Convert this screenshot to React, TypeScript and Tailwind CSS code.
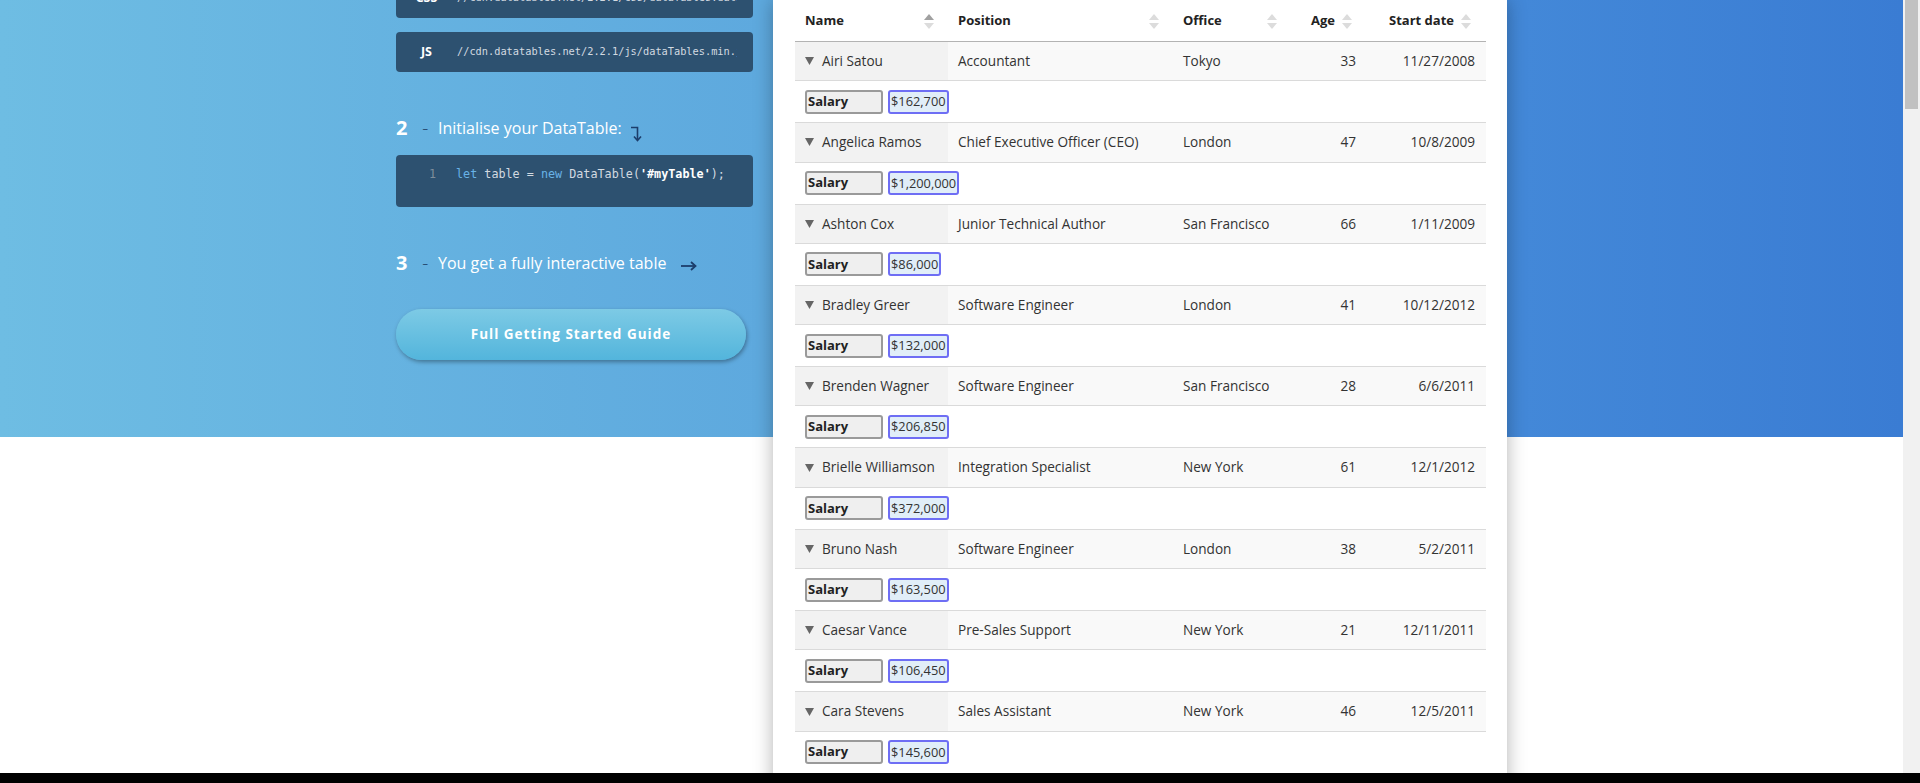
import React from "react";

type Person = {
  name: string;
  position: string;
  office: string;
  age: number;
  start: string;
  salary: string;
};

const people: Person[] = [
  { name: "Airi Satou", position: "Accountant", office: "Tokyo", age: 33, start: "11/27/2008", salary: "$162,700" },
  { name: "Angelica Ramos", position: "Chief Executive Officer (CEO)", office: "London", age: 47, start: "10/8/2009", salary: "$1,200,000" },
  { name: "Ashton Cox", position: "Junior Technical Author", office: "San Francisco", age: 66, start: "1/11/2009", salary: "$86,000" },
  { name: "Bradley Greer", position: "Software Engineer", office: "London", age: 41, start: "10/12/2012", salary: "$132,000" },
  { name: "Brenden Wagner", position: "Software Engineer", office: "San Francisco", age: 28, start: "6/6/2011", salary: "$206,850" },
  { name: "Brielle Williamson", position: "Integration Specialist", office: "New York", age: 61, start: "12/1/2012", salary: "$372,000" },
  { name: "Bruno Nash", position: "Software Engineer", office: "London", age: 38, start: "5/2/2011", salary: "$163,500" },
  { name: "Caesar Vance", position: "Pre-Sales Support", office: "New York", age: 21, start: "12/11/2011", salary: "$106,450" },
  { name: "Cara Stevens", position: "Sales Assistant", office: "New York", age: 46, start: "12/5/2011", salary: "$145,600" },
  { name: "Cedric Kelly", position: "Senior Javascript Developer", office: "Edinburgh", age: 22, start: "3/29/2012", salary: "$433,060" },
];

const cols = "grid grid-cols-[153px_225px_118px_75px_120px]";

function SortIcon({ active = false }: { active?: boolean }) {
  return (
    <svg width="10" height="15" viewBox="0 0 10 15" className="shrink-0">
      <polygon points="0,6 5,0 10,6" fill={active ? "#a0a0a0" : "#dcdcdc"} />
      <polygon points="0,9 10,9 5,15" fill="#dcdcdc" />
    </svg>
  );
}

function Header() {
  return (
    <div className={`${cols} h-[42px] border-b border-[#b3b3b3] pt-[1px] text-[13px] font-bold text-[#222]`}>
      <div className="flex items-center pl-[10px] pr-[14px]">
        <span>Name</span>
        <span className="ml-auto">
          <SortIcon active />
        </span>
      </div>
      <div className="flex items-center pl-[10px] pr-[14px]">
        <span>Position</span>
        <span className="ml-auto">
          <SortIcon />
        </span>
      </div>
      <div className="flex items-center pl-[10px] pr-[14px]">
        <span>Office</span>
        <span className="ml-auto">
          <SortIcon />
        </span>
      </div>
      <div className="flex items-center justify-end gap-[7px] pr-[14px]">
        <span>Age</span>
        <SortIcon />
      </div>
      <div className="flex items-center justify-end gap-[7px] pr-[15px]">
        <span>Start date</span>
        <SortIcon />
      </div>
    </div>
  );
}

function Row({ p }: { p: Person }) {
  return (
    <>
      <div className={`${cols} h-[39.3px] border-b border-[#dadada] bg-[#f9f9f9] text-[13.6px] text-[#333]`}>
        <div className="flex items-center bg-[#f2f2f2] pl-[10px]">
          <svg width="9" height="8" viewBox="0 0 9 8" className="shrink-0">
            <polygon points="0,0 9,0 4.5,8" fill="#666" />
          </svg>
          <span className="ml-[8px] whitespace-nowrap">{p.name}</span>
        </div>
        <div className="flex items-center pl-[10px] whitespace-nowrap">{p.position}</div>
        <div className="flex items-center pl-[10px] whitespace-nowrap">{p.office}</div>
        <div className="flex items-center justify-end pr-[10px]">{p.age}</div>
        <div className="flex items-center justify-end pr-[11px]">{p.start}</div>
      </div>
      <div className="flex h-[42px] items-center gap-[5px] border-b border-[#dadada] bg-white pl-[10px]">
        <div className="flex h-[24px] w-[78px] items-center rounded-[3px] border-2 border-[#9a9a9a] bg-[#efefef] pl-[1px] text-[13px] font-bold text-[#222]">
          Salary
        </div>
        <div className="flex h-[24px] items-center rounded-[3px] border-2 border-[#6e6ef4] bg-[#e1eef8] px-[1px] text-[12.8px] text-[#333]">
          {p.salary}
        </div>
      </div>
    </>
  );
}

function CodeLabelBox({ label, url }: { label: string; url: string }) {
  return (
    <div className="flex h-[40px] items-center rounded-[4px] bg-[#2d5170]">
      <div className="w-[61px] shrink-0 text-center text-[12.5px] font-bold text-white">{label}</div>
      <div className="w-[280px] overflow-hidden whitespace-nowrap font-['DejaVu_Sans_Mono',monospace] text-[10.3px] text-[#d3dae1]">
        {url}
      </div>
    </div>
  );
}

function StepHeading({ num, text, icon }: { num: string; text: string; icon: React.ReactNode }) {
  return (
    <div className="flex h-[30px] items-center text-white">
      <span className="text-[20px] font-bold leading-none">{num}</span>
      <span className="ml-[15px] text-[11px] text-[#1d3d66]">–</span>
      <span className="ml-[10px] text-[16px]">{text}</span>
      {icon}
    </div>
  );
}

export default function App() {
  return (
    <div className="flex h-[783px] w-[1920px] flex-col overflow-hidden bg-black font-['Open_Sans','Noto_Sans',sans-serif]">
      <div className="flex h-[773px]">
        <div className="flex-1 overflow-hidden bg-white">
          <section className="h-[437px] bg-[linear-gradient(to_right,#6ebde3_0%,#5ea9de_40%,#4388d8_80%,#3a7cd3_100%)]">
            <div className="mx-auto flex w-[1111px] items-start gap-[20px]">
              {/* Getting started steps */}
              <div className="-mt-[22px] w-[357px] shrink-0">
                <CodeLabelBox label="CSS" url="//cdn.datatables.net/2.2.1/css/dataTables.dataTables.min.css" />
                <div className="mt-[14px]">
                  <CodeLabelBox label="JS" url="//cdn.datatables.net/2.2.1/js/dataTables.min.js" />
                </div>

                <div className="mt-[41px]">
                  <StepHeading
                    num="2"
                    text="Initialise your DataTable:"
                    icon={
                      <svg width="13" height="16" viewBox="0 0 13 16" className="ml-[8px] mt-[12px]">
                        <path d="M1 1.5 H7.5 V13.5" fill="none" stroke="#1c3d6b" strokeWidth="1.6" />
                        <path d="M4 10.5 L7.5 14.5 L11 10.5" fill="none" stroke="#1c3d6b" strokeWidth="1.6" />
                      </svg>
                    }
                  />
                </div>

                <div className="mt-[12px] h-[52px] rounded-[4px] bg-[#2d5170] pt-[11px]">
                  <div className="flex h-[18px] items-center font-['DejaVu_Sans_Mono',monospace] text-[11.75px]">
                    <span className="w-[40px] shrink-0 text-right text-[#7d8d9b]">1</span>
                    <span className="ml-[20px] whitespace-nowrap text-[#d3dae1]">
                      <span className="text-[#69b3e7]">let</span> table = <span className="text-[#69b3e7]">new</span> DataTable(
                      <span className="font-bold text-white">'#myTable'</span>);
                    </span>
                  </div>
                </div>

                <div className="mt-[41px]">
                  <StepHeading
                    num="3"
                    text="You get a fully interactive table"
                    icon={
                      <svg width="17" height="10" viewBox="0 0 17 10" className="ml-[14px] mt-[5px]">
                        <path d="M1 5 H15" fill="none" stroke="#1c3d6b" strokeWidth="1.8" />
                        <path d="M11 1 L15.5 5 L11 9" fill="none" stroke="#1c3d6b" strokeWidth="1.8" />
                      </svg>
                    }
                  />
                </div>

                <div className="mt-[31px] flex h-[51px] w-[350px] items-center justify-center rounded-full bg-[linear-gradient(to_bottom,#7dcae5,#53b5dc)] text-[13.5px] font-bold tracking-[1px] text-white shadow-[1px_2px_4px_rgba(0,0,0,0.35)]">
                  Full Getting Started Guide
                </div>
              </div>

              {/* Demo table panel */}
              <div className="w-[734px] shrink-0 bg-white pl-[22px] pr-[21px] shadow-[0_0_18px_rgba(0,0,0,0.3)]">
                <div className="h-[800px]">
                  <Header />
                  {people.map((p) => (
                    <Row key={p.name} p={p} />
                  ))}
                </div>
              </div>
            </div>
          </section>
        </div>
        <div className="w-[17px] shrink-0 bg-[#f1f1f1] px-[2px]">
          <div className="h-[109px] bg-[#c1c1c1]" />
        </div>
      </div>
      <div className="h-[10px] bg-black" />
    </div>
  );
}
